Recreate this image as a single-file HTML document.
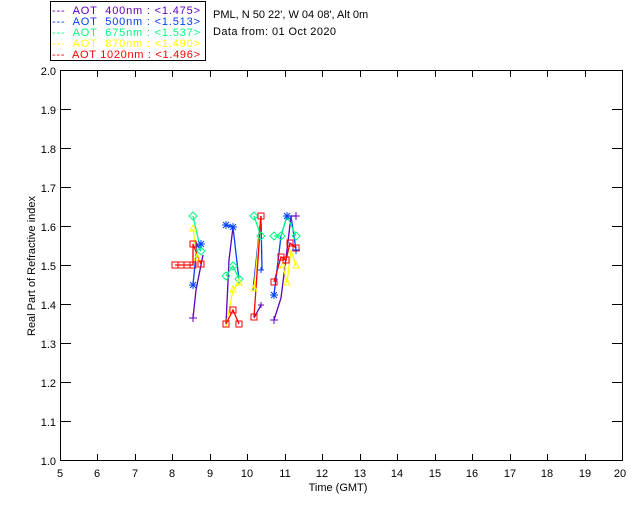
<!DOCTYPE html>
<html><head><style>body{margin:0;background:#fff}svg{display:block}text{font-family:"Liberation Sans",sans-serif;font-size:11px;white-space:pre}</style></head><body>
<svg width="640" height="512" xmlns="http://www.w3.org/2000/svg">
<rect x="50.5" y="1.5" width="155" height="59" fill="none" stroke="#000"/>
<g font-size="11">
<text x="52" y="14" fill="#6000c0" textLength="148" lengthAdjust="spacing">---  AOT  400nm : &lt;1.475&gt;</text>
<text x="52" y="25" fill="#0040ff" textLength="148" lengthAdjust="spacing">---  AOT  500nm : &lt;1.513&gt;</text>
<text x="52" y="36" fill="#00ff80" textLength="148" lengthAdjust="spacing">---  AOT  675nm : &lt;1.537&gt;</text>
<text x="52" y="47" fill="#ffff00" textLength="148" lengthAdjust="spacing">---  AOT  870nm : &lt;1.490&gt;</text>
<text x="52" y="58" fill="#ff0000" textLength="148" lengthAdjust="spacing">---  AOT 1020nm : &lt;1.496&gt;</text>
<text x="213" y="18" fill="#000">PML, N 50 22', W 04 08', Alt 0m</text>
<text x="213" y="35" fill="#000" textLength="123" lengthAdjust="spacing">Data from: 01 Oct 2020</text>
</g>
<rect x="60.5" y="70.5" width="562" height="390" fill="none" stroke="#000"/>
<g stroke="#000">
<path d="M97.5 71v6M135.5 71v6M172.5 71v6M210.5 71v6M247.5 71v6M285.5 71v6M322.5 71v6M360.5 71v6M397.5 71v6M435.5 71v6M472.5 71v6M510.5 71v6M547.5 71v6M585.5 71v6"/>
<path d="M97.5 460v-6M135.5 460v-6M172.5 460v-6M210.5 460v-6M247.5 460v-6M285.5 460v-6M322.5 460v-6M360.5 460v-6M397.5 460v-6M435.5 460v-6M472.5 460v-6M510.5 460v-6M547.5 460v-6M585.5 460v-6"/>
<path d="M61 109.5h10M61 148.5h10M61 187.5h10M61 226.5h10M61 265.5h10M61 304.5h10M61 343.5h10M61 382.5h10M61 421.5h10"/>
<path d="M622 109.5h-10M622 148.5h-10M622 187.5h-10M622 226.5h-10M622 265.5h-10M622 304.5h-10M622 343.5h-10M622 382.5h-10M622 421.5h-10"/>
</g>
<g fill="#000" text-anchor="end" font-size="10">
<text x="56" y="75">2.0</text><text x="56" y="114">1.9</text><text x="56" y="153">1.8</text><text x="56" y="192">1.7</text><text x="56" y="231">1.6</text><text x="56" y="270">1.5</text><text x="56" y="309">1.4</text><text x="56" y="348">1.3</text><text x="56" y="387">1.2</text><text x="56" y="426">1.1</text><text x="56" y="465">1.0</text>
</g>
<g fill="#000" text-anchor="middle" font-size="10">
<text x="60" y="477">5</text><text x="97" y="477">6</text><text x="135" y="477">7</text><text x="172" y="477">8</text><text x="210" y="477">9</text><text x="247" y="477">10</text><text x="285" y="477">11</text><text x="322" y="477">12</text><text x="360" y="477">13</text><text x="397" y="477">14</text><text x="435" y="477">15</text><text x="472" y="477">16</text><text x="510" y="477">17</text><text x="547" y="477">18</text><text x="585" y="477">19</text><text x="620" y="477">20</text>
<text x="338" y="491">Time (GMT)</text>
<text transform="translate(35 266) rotate(-90)">Real Part of Refractive index</text>
</g>
<g fill="none" stroke-width="1.3">
<path stroke="#6000c0" d="M193 318L196 290L201 265L203 255M226 324L229 260L233 227M254 318L261 305M274 320L281 298L287 250L291 216L296 216"/>
<path stroke="#0040ff" d="M193 285L197 244L201 251M226 225L233 227L239 280M253 290L261 216L262 270M274 295L281 236L287 216L291 216L296 250"/>
<path stroke="#00ff80" d="M193 216L201 251M226 276L233 266L239 279M254 216L261 236M274 236L281 236L287 216L296 236"/>
<path stroke="#ffff00" d="M193 229L197 258M226 326L233 290L239 283M254 289L261 218M283 266L287 283L291 250L296 266"/>
<path stroke="#ff0000" d="M175 265H193L193 244L201 264M226 324L233 310L239 324M254 317L261 216M274 282L281 257L286 260L290 243L296 248"/>
</g>
<g fill="none" stroke="#00ff80">
<path d="M193 212l4 4-4 4-4-4zM201 247l4 4-4 4-4-4zM226 272l4 4-4 4-4-4zM233 262l4 4-4 4-4-4zM239 275l4 4-4 4-4-4zM254 212l4 4-4 4-4-4zM261 232l4 4-4 4-4-4zM274 232l4 4-4 4-4-4zM281 232l4 4-4 4-4-4zM296 232l4 4-4 4-4-4z"/>
</g>
<g fill="none" stroke="#ffff00">
<path d="M193 225l3 6h-6zM197 254l3 6h-6zM233 286l3 6h-6zM239 279l3 6h-6zM254 285l3 6h-6zM283 262l3 6h-6zM287 279l3 6h-6zM296 262l3 6h-6z"/>
</g>
<g fill="none" stroke="#ff0000">
<rect x="172" y="262" width="6" height="6"/><rect x="178" y="262" width="6" height="6"/><rect x="184" y="262" width="6" height="6"/><rect x="190" y="262" width="6" height="6"/><rect x="190" y="241" width="6" height="6"/><rect x="198" y="261" width="6" height="6"/>
<rect x="223" y="321" width="6" height="6"/><rect x="230" y="307" width="6" height="6"/><rect x="236" y="321" width="6" height="6"/>
<rect x="251" y="314" width="6" height="6"/><rect x="258" y="213" width="6" height="6"/>
<rect x="271" y="279" width="6" height="6"/><rect x="278" y="254" width="6" height="6"/><rect x="283" y="257" width="6" height="6"/><rect x="287" y="240" width="6" height="6"/><rect x="293" y="245" width="6" height="6"/>
</g>
<g fill="none" stroke="#0040ff">
<path d="M189 285h8M193 281v8M190 282l6 6M196 282l-6 6M197 244h8M201 240v8M198 241l6 6M204 241l-6 6M222 225h8M226 221v8M223 222l6 6M229 222l-6 6M229 227h8M233 223v8M230 224l6 6M236 224l-6 6M258 270h6M261 267v6M270 295h8M274 291v8M271 292l6 6M277 292l-6 6M283 216h8M287 212v8M284 213l6 6M290 213l-6 6M292 250h8M296 246v8"/>
</g>
<g fill="none" stroke="#6000c0">
<path d="M189 318h8M193 314v8M258 305h6M261 302v6M270 320h8M274 316v8M292 216h8M296 212v8"/>
</g>
</svg>
</body></html>
